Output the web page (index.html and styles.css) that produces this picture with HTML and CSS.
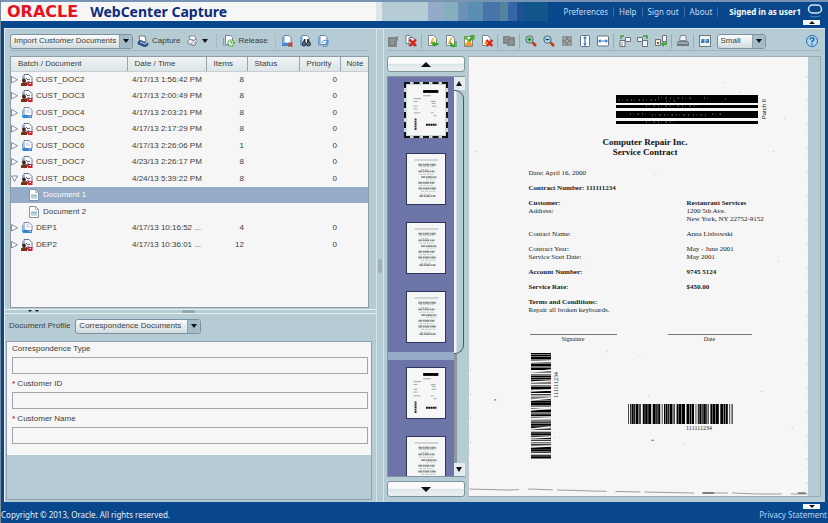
FILE: index.html
```html
<!DOCTYPE html>
<html lang="en">
<head>
<meta charset="utf-8">
<title>Oracle WebCenter Capture</title>
<link rel="stylesheet" href="styles.css">
</head>
<body>
<svg class="defs" aria-hidden="true">
  <symbol id="scanner" viewBox="0 0 12 12"><path d="M2 1h6l1 6H3z" fill="#fff" stroke="#778"/><path d="M1 7l2-2 6 3 2 0v2l-3 2-7-3z" fill="#28568e" stroke="#173a66" stroke-width=".6"/><path d="M3 7l5 2 2-1" fill="none" stroke="#cde"/></symbol>
  <symbol id="scanedit" viewBox="0 0 12 12"><path d="M3 1h6l1 4H4z" fill="#fff" stroke="#889"/><path d="M1 7l3-3 6 3v2l-3 2z" fill="#e8eef2" stroke="#6a7484" stroke-width=".8"/><path d="M5 9l5-5 1 1-4 5z" fill="#fff" stroke="#667" stroke-width=".6"/></symbol>
  <symbol id="batch" viewBox="0 0 12 12"><path d="M3 .5h5l3 3v5H3z" fill="#fff" stroke="#7186ac"/><path d="M1.500 3v6.500h8" fill="none" stroke="#8aa4c8"/><path d="M5 3h3M5 5h4" stroke="#b9c6dc"/><path d="M1 9q4-3 6 0t4-1v3H2z" fill="#2c86d8"/></symbol>
  <symbol id="batchlock" viewBox="0 0 12 12"><path d="M3 .5h5l3 3v6H3z" fill="#fff" stroke="#64759c"/><path d="M1.500 2v5" stroke="#8aa4c8"/><path d="M5 4l2 2 2-1" stroke="#557" fill="none"/><path d="M4 9q3-3 5-1l2 1v2H4z" fill="#3f78bd"/><circle cx="3" cy="6.500" r="1.900" fill="#4b2613"/><path d="M0 12V9.500q3-3 6 0V12z" fill="#6f3515"/><path d="M7 8h4.500v4H7z" fill="#d9202a"/><path d="M8.500 9.500h1.500" stroke="#fff"/></symbol>
  <symbol id="doc" viewBox="0 0 12 12"><path d="M1.500.5h6l3 3v8h-9z" fill="#fff" stroke="#8396a0"/><path d="M7.500.5v3h3" fill="none" stroke="#8396a0" stroke-width=".7"/><path d="M3 5h6v5H3z" fill="#c4d8df"/><path d="M3 7h6" stroke="#8eabb8"/></symbol>
  <symbol id="release" viewBox="0 0 12 12"><path d="M2.500.5h5l2 2v7h-7z" fill="#fff" stroke="#7186ac"/><path d="M.5 3v7h5" fill="none" stroke="#7d9bc4"/><circle cx="8" cy="8" r="3" fill="#eff7e8" stroke="#58a044" stroke-width="1.500" stroke-dasharray="1.500 .6"/><path d="M8 6.500V8h1.500" fill="none" stroke="#357a28"/></symbol>
  <symbol id="batchdel" viewBox="0 0 12 12"><path d="M3 .5h5l2 2v7H3z" fill="#fff" stroke="#6482b4"/><path d="M1.500 2v8h6" fill="none" stroke="#6b98cf"/><path d="M1 9q4-3 8 0v2H1z" fill="#3f8bd5"/><path d="M7.500 7.500l4 4m0-4l-4 4" stroke="#d42c18" stroke-width="1.500"/></symbol>
  <symbol id="find" viewBox="0 0 12 12"><path d="M3 .5h5l2 2v6H3z" fill="#fff" stroke="#6482b4"/><path d="M1.500 2v8h6" fill="none" stroke="#6b98cf"/><path d="M4 7l1-3h1.500v3zm4 0V4h1.500l1 3z" fill="#2a3340"/><circle cx="5" cy="9" r="2" fill="#667380" stroke="#222b38"/><circle cx="9.500" cy="9" r="2" fill="#667380" stroke="#222b38"/></symbol>
  <symbol id="refresh" viewBox="0 0 12 12"><path d="M3 .5h5l2 2v7H3z" fill="#fff" stroke="#6482b4"/><path d="M1.500 2v8h6" fill="none" stroke="#6b98cf"/><path d="M5 8a3 3 0 0 1 5-2l1-1v3H8m3 1a3 3 0 0 1-5 2" fill="none" stroke="#348bdc"/></symbol>
  <symbol id="editoff" viewBox="0 0 12 12"><path d="M1 2h7l3-1v4l-1 1v6H1z" fill="#828586"/><path d="M3 5h5M3 8h4" stroke="#9fa6a8"/></symbol>
  <symbol id="docdel" viewBox="0 0 12 12"><path d="M1 .5h4l3 3v5H1z" fill="#fff" stroke="#758091"/><path d="M4 2.500h4l2 2v6H4z" fill="#d8e4ee" stroke="#667891"/><path d="M4.500 4.500l6.500 6.500m0-6.500l-6.500 6.500" stroke="#df1f13" stroke-width="2.400"/></symbol>
  <symbol id="pagein" viewBox="0 0 12 12"><path d="M1.500.5h5l3 3v7h-8z" fill="#fff" stroke="#7b8690"/><path d="M3 9l2-5 2 5z" fill="#e89922"/><circle cx="6" cy="4" r="1.500" fill="#f3c83e"/><path d="M11.500 8H8V6L4.500 9 8 12v-2h3.500z" fill="#36a428"/></symbol>
  <symbol id="pageend" viewBox="0 0 12 12"><path d="M1.500.5h5l3 3v7h-8z" fill="#fff" stroke="#7b8690"/><path d="M3 9l2-5 2 5z" fill="#e89922"/><circle cx="6" cy="4" r="1.500" fill="#f3c83e"/><path d="M5 8h2l1.500 2L10 8v4H6z" fill="#36a428"/><path d="M11 6v6" stroke="#27901c"/></symbol>
  <symbol id="pageswap" viewBox="0 0 12 12"><path d="M1.500 1.500h8v10h-8z" fill="#fff" stroke="#7b8690"/><path d="M2 9l4-5 3 5v2H2z" fill="#ef9d25"/><path d="M11.500 0v5L10 4 7 7 5 5l3-3-1-2z" fill="#43aa2e"/><path d="M1 1h4L4 3l2 2-1 1-3-2-1 1z" fill="#5fae42"/></symbol>
  <symbol id="pagedel" viewBox="0 0 12 12"><path d="M1.500.5h5l3 3v7h-8z" fill="#fff" stroke="#7b8690"/><path d="M3 9l2-4 2 4z" fill="#e89922"/><path d="M5.500 5l6 6m0-6l-6 6" stroke="#df1f13" stroke-width="2.200"/></symbol>
  <symbol id="copyoff" viewBox="0 0 12 12"><path d="M0 1h7v1h5v9H4V9H0z" fill="#828586"/><path d="M2 3h4M2 5h3M6 6h4M6 8h4" stroke="#979d9f"/></symbol>
  <symbol id="zoomin" viewBox="0 0 12 12"><path d="M7.500 7.500L11 11" stroke="#d92e18" stroke-width="2.500"/><circle cx="4.500" cy="4.500" r="3.700" fill="#a8e0ad" stroke="#526574"/><path d="M4.500 2.500v4m-2-2h4" stroke="#16803a" stroke-width="1.400"/></symbol>
  <symbol id="zoomout" viewBox="0 0 12 12"><path d="M7.500 7.500L11 11" stroke="#d92e18" stroke-width="2.500"/><circle cx="4.500" cy="4.500" r="3.700" fill="#a8e0e6" stroke="#526574"/><path d="M2.500 4.500h4" stroke="#164b78" stroke-width="1.400"/></symbol>
  <symbol id="fitoff" viewBox="0 0 12 12"><rect x="1" y="1" width="10" height="10" rx="1" fill="#8c9092"/><path d="M6 2v8M2 6h8" stroke="#747879"/><path d="M2.500 2.500h2v2h-2zM7.500 2.500h2v2h-2zM2.500 7.500h2v2h-2zM7.500 7.500h2v2h-2zM5 5h2v2H5z" fill="#a5aaad"/></symbol>
  <symbol id="fith" viewBox="0 0 12 12"><rect x="1.500" y=".5" width="9" height="11" rx="1" fill="#fff" stroke="#67717c"/><path d="M6 1l2 2.500H6.600v5H8L6 11 4 8.500h1.400v-5H4z" fill="#2b78cc"/></symbol>
  <symbol id="fitw" viewBox="0 0 12 12"><rect x=".5" y="1" width="11" height="10" rx="1" fill="#fff" stroke="#67717c"/><path d="M1 6l2.500-2v1.400h5V4L11 6 8.500 8V6.600h-5V8z" fill="#2b78cc"/></symbol>
  <symbol id="rotl" viewBox="0 0 12 12"><path d="M1 5.500h5v6H1zM6.500 2.500h5v4h-5z" fill="#f4f4f4" stroke="#5e6870" stroke-width=".9"/><path d="M5 1H2v3" fill="none" stroke="#4a9639" stroke-width="1.500"/><path d="M2 8h2m0 2H2" stroke="#999"/></symbol>
  <symbol id="rotr" viewBox="0 0 12 12"><path d="M5.500 5.500h5v6h-5zM.5 2.500h5v4h-5z" fill="#f4f4f4" stroke="#5e6870" stroke-width=".9"/><path d="M6 1h4v3" fill="none" stroke="#4a9639" stroke-width="1.500"/></symbol>
  <symbol id="rot180" viewBox="0 0 12 12"><path d="M.5 4.500h5v6h-5z" fill="#ffe9bd" stroke="#5e6870" stroke-width=".9"/><path d="M7.500.5h4v6h-4z" fill="#f4f4f4" stroke="#5e6870" stroke-width=".9"/><path d="M2 7h2v2H2z" fill="#3c70b6"/><path d="M12 7v3H9v2L5.500 9 9 6.500V8h1V7z" fill="#48a536"/></symbol>
  <symbol id="print" viewBox="0 0 12 12"><path d="M3.500.5h5l1 5h-7z" fill="#eef3f6" stroke="#818b94"/><path d="M1 6h10l1 2v3H0V8z" fill="#6d7984"/><path d="M1 8h10" stroke="#c5d2da"/></symbol>
  <symbol id="pair" viewBox="0 0 12 12"><rect x=".5" y=".5" width="11" height="11" fill="#eef1f3" stroke="#6f7980"/><path d="M2 4h3.500v4H2zm4.500 0H10v4H6.500z" fill="#397dbb"/><path d="M2 5h1M7 5h1" stroke="#fff"/></symbol>
  <symbol id="help" viewBox="0 0 12 12"><circle cx="6" cy="6" r="5.500" fill="#a9d7f5" stroke="#2869a5"/><path d="M4 4.500Q4 2.800 6 2.800t2 1.700Q8 5.500 6 6.200V7.500M6 8.500V10" fill="none" stroke="#19579c" stroke-width="1.300"/></symbol>
  <symbol id="right" viewBox="0 0 7 8"><path d="M.5.500v6.500L6.500 3.800z" fill="#fff" stroke="#68747c" stroke-width=".8"/></symbol>
  <symbol id="down" viewBox="0 0 7 8"><path d="M.5 1h6L3.500 6.500z" fill="#fff" stroke="#68747c" stroke-width=".8"/></symbol>
  <symbol id="formpage" viewBox="0 0 40 52"><path d="M17 6.500h16" stroke="#000" stroke-width="3"/><path d="M17 11h8" stroke="#999"/><path d="M7 14h8M7 17h4M25 17h5M26 19h4M7 22h4M26 22h5M7 25h4M7 29h7M25 29h3M28 32h3" stroke="#9ba6a6"/><path d="M9 35v12" stroke="#333" stroke-width="2" stroke-dasharray="2 .5"/><path d="M20 41.500h11" stroke="#111" stroke-width="2" stroke-dasharray="2 .4"/></symbol>
  <symbol id="textpage" viewBox="0 0 40 52"><path d="M8 6h25" stroke="#a9b0b0"/><path d="M12 11h19M12 18h17M15 24h16M12 30h17M12 36h19M13 44h17" stroke="#879191" stroke-width="2" stroke-dasharray="4 .7 2 .4"/><path d="M13 13h16M15 16h8M13 21h16M20 26h10M13 33h14M15 39h16M14 42h12" stroke="#b8c0c0" stroke-dasharray="3 1"/></symbol>
</svg>

<header class="top">
  <div class="brand"><span class="oracle">ORACLE</span><h1>WebCenter Capture</h1></div>
  <nav class="links"><a href="#">Preferences</a><a href="#">Help</a><a href="#">Sign out</a><a href="#">About</a><strong>Signed in as user1</strong></nav>
  <svg class="pill" viewBox="0 0 16 14" aria-hidden="true"><rect x="1.500" y="1" width="13" height="8" rx="4" fill="none" stroke="#d8e8f4" stroke-width="1.500"/><path d="M3 12q5 2 10 0" fill="none" stroke="#4d86b6"/></svg>
  <button class="fold fold-up" aria-label="Hide header"></button>
</header>

<main class="app">
  <section class="left">
    <div class="batches">
      <div class="tools">
        <span class="pick profile"><select aria-label="Client profile"><option>Import Customer Documents</option></select></span>
        <button class="tool"><svg><use href="#scanner"/></svg>Capture</button>
        <button class="tool more" aria-label="Capture options"><svg><use href="#scanedit"/></svg><i></i></button>
        <button class="tool rel"><svg><use href="#release"/></svg>Release</button>
        <div class="group last"><button class="tool" aria-label="Delete batch"><svg><use href="#batchdel"/></svg></button><button class="tool" aria-label="Find batch"><svg><use href="#find"/></svg></button><button class="tool" aria-label="Refresh"><svg><use href="#refresh"/></svg></button></div>
      </div>
      <div class="list">
        <table>
          <colgroup><col class="c-name"><col class="c-date"><col class="c-items"><col class="c-status"><col class="c-prio"><col></colgroup>
          <thead><tr><th>Batch / Document</th><th>Date / Time</th><th>Items</th><th>Status</th><th>Priority</th><th>Note</th></tr></thead>
          <tbody>
            <tr><td><div class="name"><svg class="tw"><use href="#right"/></svg><svg><use href="#batchlock"/></svg>CUST_DOC2</div></td><td>4/17/13 1:56:42 PM</td><td>8</td><td></td><td>0</td><td></td></tr>
            <tr><td><div class="name"><svg class="tw"><use href="#right"/></svg><svg><use href="#batchlock"/></svg>CUST_DOC3</div></td><td>4/17/13 2:00:49 PM</td><td>8</td><td></td><td>0</td><td></td></tr>
            <tr><td><div class="name"><svg class="tw"><use href="#right"/></svg><svg><use href="#batch"/></svg>CUST_DOC4</div></td><td>4/17/13 2:03:21 PM</td><td>8</td><td></td><td>0</td><td></td></tr>
            <tr><td><div class="name"><svg class="tw"><use href="#right"/></svg><svg><use href="#batchlock"/></svg>CUST_DOC5</div></td><td>4/17/13 2:17:29 PM</td><td>8</td><td></td><td>0</td><td></td></tr>
            <tr><td><div class="name"><svg class="tw"><use href="#right"/></svg><svg><use href="#batch"/></svg>CUST_DOC6</div></td><td>4/17/13 2:26:06 PM</td><td>1</td><td></td><td>0</td><td></td></tr>
            <tr><td><div class="name"><svg class="tw"><use href="#right"/></svg><svg><use href="#batchlock"/></svg>CUST_DOC7</div></td><td>4/23/13 2:26:17 PM</td><td>8</td><td></td><td>0</td><td></td></tr>
            <tr><td><div class="name"><svg class="tw"><use href="#down"/></svg><svg><use href="#batchlock"/></svg>CUST_DOC8</div></td><td>4/24/13 5:39:22 PM</td><td>8</td><td></td><td>0</td><td></td></tr>
            <tr class="on"><td><div class="name child"><svg><use href="#doc"/></svg>Document 1</div></td><td></td><td></td><td></td><td></td><td></td></tr>
            <tr><td><div class="name child"><svg><use href="#doc"/></svg>Document 2</div></td><td></td><td></td><td></td><td></td><td></td></tr>
            <tr><td><div class="name"><svg class="tw"><use href="#right"/></svg><svg><use href="#batch"/></svg>DEP1</div></td><td>4/17/13 10:16:52 ...</td><td>4</td><td></td><td>0</td><td></td></tr>
            <tr><td><div class="name"><svg class="tw"><use href="#right"/></svg><svg><use href="#batchlock"/></svg>DEP2</div></td><td>4/17/13 10:36:01 ...</td><td>12</td><td></td><td>0</td><td></td></tr>
          </tbody>
        </table>
      </div>
    </div>
    <div class="hsplit"><span class="arrows"><i></i><i></i></span><span class="grip"></span></div>
    <div class="meta">
      <div class="profile-row"><label for="dp">Document Profile</label><span class="pick docprofile"><select id="dp"><option>Correspondence Documents</option></select></span></div>
      <form class="form">
        <div class="fields">
          <label for="ct">Correspondence Type</label><input id="ct">
          <label for="ci"><b>*</b> Customer ID</label><input id="ci">
          <label for="cn"><b>*</b> Customer Name</label><input id="cn">
        </div>
      </form>
    </div>
  </section>
  <div class="vsplit"><span></span></div>
  <section class="right">
    <div class="tools view">
      <div class="group first"><button class="tool" aria-label="Edit document"><svg><use href="#editoff"/></svg></button><button class="tool" aria-label="Delete document"><svg><use href="#docdel"/></svg></button></div>
      <div class="group"><button class="tool" aria-label="Insert page"><svg><use href="#pagein"/></svg></button><button class="tool" aria-label="Append page"><svg><use href="#pageend"/></svg></button><button class="tool" aria-label="Replace page"><svg><use href="#pageswap"/></svg></button><button class="tool" aria-label="Delete page"><svg><use href="#pagedel"/></svg></button></div>
      <div class="group"><button class="tool" aria-label="Copy"><svg><use href="#copyoff"/></svg></button></div>
      <div class="group"><button class="tool" aria-label="Zoom in"><svg><use href="#zoomin"/></svg></button><button class="tool" aria-label="Zoom out"><svg><use href="#zoomout"/></svg></button><button class="tool" aria-label="Fit page"><svg><use href="#fitoff"/></svg></button><button class="tool" aria-label="Fit height"><svg><use href="#fith"/></svg></button><button class="tool" aria-label="Fit width"><svg><use href="#fitw"/></svg></button></div>
      <div class="group"><button class="tool" aria-label="Rotate left"><svg><use href="#rotl"/></svg></button><button class="tool" aria-label="Rotate right"><svg><use href="#rotr"/></svg></button><button class="tool" aria-label="Rotate 180"><svg><use href="#rot180"/></svg></button></div>
      <div class="group"><button class="tool" aria-label="Print"><svg><use href="#print"/></svg></button></div>
      <div class="group"><button class="tool" aria-label="Thumbnails"><svg><use href="#pair"/></svg></button><span class="pick size"><select aria-label="Thumbnail size"><option>Small</option></select></span></div>
      <button class="tool help" aria-label="Help"><svg><use href="#help"/></svg></button>
    </div>
    <div class="viewer">
      <div class="thumbs">
        <button class="step up" aria-label="Previous"></button>
        <div class="strip">
          <div class="pages">
            <div class="doc"><svg class="thumb sel"><use href="#formpage"/></svg><svg class="thumb"><use href="#textpage"/></svg><svg class="thumb"><use href="#textpage"/></svg><svg class="thumb"><use href="#textpage"/></svg></div>
            <div class="doc"><svg class="thumb"><use href="#formpage"/></svg><svg class="thumb"><use href="#textpage"/></svg></div>
          </div>
          <div class="scroll"><button class="up" aria-label="Scroll up"></button><span class="knob"></span><span class="track"></span><button aria-label="Scroll down"></button></div>
        </div>
        <button class="step" aria-label="Next"></button>
      </div>
      <div class="canvas">
        <article class="page">
          <svg class="specks" viewBox="0 0 340 441" aria-hidden="true"><path d="M0 434l40 1 20-1 30 1 35 1 50 1 50 1 40 0 25 1 50 0" fill="none" stroke="#888" stroke-width=".8" stroke-dasharray="50 9 25 4"/><path d="M234 438h12M330 438h8" stroke="#333"/><path d="M255 26h1M272 35h1M316 62h1M184 385h2M138 296h1M310 205h1M171 300h1M293 336h1M216 388h1M120 208h1M187 118h1M324 372h1M305 95h1M180 340h1M85 382h1M6 95h1" stroke="#bbb"/><path d="M25 344.500h2M183 385h2" stroke="#555"/><path d="M1 300v90M339 5v430" stroke="#bbb" stroke-width=".6" stroke-dasharray="1 13 2 8"/></svg>
          <div class="patch">
            <svg viewBox="0 0 142 29" aria-hidden="true"><path d="M0 0h142v8H0zM0 10h142v3H0zM0 16h142v7H0zM0 26h142v3H0z"/><path d="M3 5h40M42 3h35M50 6h12M88 3h4M109 4h3M14 19h20M36 20h38M77 20h14M96 19h10M30 11h55M30 27h30" stroke="#aaa" stroke-width=".8" stroke-dasharray="1 2 .5 4 1.500 3"/></svg>
            <span>Patch II</span>
          </div>
          <h2>Computer Repair Inc.<br>Service Contract</h2>
          <div class="terms">
            <p>Date: April 16, 2000</p><p></p>
            <p><b>Contract Number: 111111234</b></p><p></p>
            <p><b>Customer:</b><br>Address:</p><p><b>Restaurant Services</b><br>1200 5th Ave.<br>New York, NY 22752-9152</p>
            <p>Contact Name:</p><p>Anna Lisbowski</p>
            <p>Contract Year:<br>Service Start Date:</p><p>May - June 2001<br>May 2001</p>
            <p><b>Account Number:</b></p><p><b>9745 5124</b></p>
            <p><b>Service Rate:</b></p><p><b>$450.00</b></p>
            <p><b>Terms and Conditions:</b><br>Repair all broken keyboards.</p><p></p>
          </div>
          <div class="sign"><span>Signature</span><span>Date</span></div>
          <div class="codes">
            <div class="vcode"><svg viewBox="0 0 20 106" aria-hidden="true"><path d="M10 0V106" stroke="#000" stroke-width="20" stroke-dasharray="1 .5 2 .4 2 .5 1 2 1 .5 2 .5 1 .6 2 1 .6 1 .5 1.300 1 .7"/><path d="M0 9l20-1M0 19l20-2M0 29l20-1M0 38l20-1M0 47l20-2M0 57l20-2M0 66l20-1M0 76l20-2M0 85l20-1M0 94l20-1" stroke="#f5f5f5" stroke-width="1.300"/></svg><span>111111234</span></div>
            <div class="hcode"><svg viewBox="0 0 105 20" aria-hidden="true"><path d="M0 10H105" stroke="#000" stroke-width="20" stroke-dasharray=".7 1.500 1 .5 2 .4 1 .6 2.500 .5 1 .6 .7 1.800 2 .4 2.500 .5 3 1.500 3 .5 1.500 .5 2 1.600"/></svg><span>111111234</span></div>
          </div>
        </article>
      </div>
    </div>
  </section>
</main>

<footer class="foot"><span>Copyright © 2013, Oracle. All rights reserved.</span><a href="#">Privacy Statement</a><button class="fold fold-down" aria-label="Hide footer"></button></footer>
</body>
</html>
```
FILE: styles.css
```css
:root { --pale: #b5ccd4; --blue: #08478c; --paper: #f6f6f6; --line: #8f9da6; }
* { box-sizing: border-box; }
body { margin: 0; height: 100vh; overflow: hidden; display: flex; flex-direction: column; background: var(--blue); border-left: 1px solid #7c8c9c; font: 8px/10px "Liberation Sans", Arial, sans-serif; color: #3c3c3c; }
button, select, input { font: inherit; color: inherit; margin: 0; padding: 0; border: 0; background: none; }
h1, h2, p { margin: 0; }
a { color: inherit; text-decoration: none; }
.defs { position: absolute; width: 0; height: 0; }

.top { position: relative; height: 28px; flex: none; display: flex; justify-content: space-between; border-top: 2px solid #7894b4; font-family: "Noto Sans", sans-serif; }
.top { background: linear-gradient(90deg, var(--paper) 375px, #dde6e8 375px 381px, var(--pale) 381px 427px, #93abc8 427px 443px, #84b0bd 443px 457px, #6c91b5 457px 467px, #5a8eb2 467px 482px, #4874aa 482px 499px, #55839f 499px 507px, #3567a8 507px 516px, #205292 516px 522px, #10568c 522px 547px, var(--blue) 547px) 0 0 / 100% 19px no-repeat; }
.brand { display: flex; align-items: center; height: 19px; padding-left: 6px; gap: 12px; }
.oracle { font: bold 16px/18px "DejaVu Sans", sans-serif; color: #e8121c; }
h1 { font: bold 14px/18px "Noto Sans", sans-serif; color: #0c2c7c; }
.links { display: flex; align-items: center; height: 19px; padding-right: 27px; color: #c6dcf0; }
.links a { padding-right: 5px; margin-right: 5px; border-right: 1px solid #3c6ca0; }
.links strong { padding-left: 6px; color: #fff; }
.pill { position: absolute; right: 5px; top: 2px; width: 16px; height: 14px; }
.fold { position: absolute; right: 8px; width: 17px; height: 5px; background: var(--paper); }
.fold-up { top: 18px; }
.fold-down { top: 2px; }
.fold::after, .step::after, .scroll button::after, .pick::after, .more i, .arrows i { content: ""; display: block; width: 0; height: 0; margin: auto; border: solid transparent; border-width: 4px 3px 0; border-top-color: #111; }
.fold::after { border-width: 3px 3px 0; }
.fold-up::after, .step.up::after, .scroll .up::after { transform: rotate(180deg); }

.app { flex: 1; min-height: 0; display: grid; grid-template-columns: 371fr 8px 442fr; margin: 0 3px 0 3px; background: var(--pale); border-left: 1px solid #e8f0f2; border-top: 1px solid #dfeaee; }
.left { display: flex; flex-direction: column; min-width: 0; min-height: 0; }
.batches { flex: 281 1 0; min-height: 0; display: flex; flex-direction: column; padding: 0 7px 1px 5px; }
.tools { display: flex; align-items: center; height: 22px; padding-top: 3px; border-bottom: 1px solid #a0b4c0; flex: none; }
.tool { display: flex; align-items: center; gap: 3px; height: 14px; }
.tool svg { width: 12px; height: 12px; }
.pick { position: relative; display: inline-flex; align-items: center; height: 15px; border: 1px solid #7c929e; border-radius: 3px; background: linear-gradient(#fafafa, #e4eaec 60%, #d0dadd); }
.pick select { appearance: none; width: 100%; height: 13px; padding: 0 14px 0 3px; outline: 0; }
.pick::after { position: absolute; right: 3px; top: 4px; pointer-events: none; }
.pick::before { content: ""; position: absolute; right: 0; top: 0; bottom: 0; width: 12px; background: #a4bcc8; border-left: 1px solid #8ba2ad; border-radius: 0 2px 2px 0; pointer-events: none; }
.profile { width: 123px; margin-right: 4px; }
.more { margin: 0 8px 0 6px; gap: 4px; }
.rel { padding-left: 6px; border-left: 1px dotted #98aab4; }
.group { display: flex; align-items: center; gap: 6px; margin-left: 4px; padding-left: 5px; height: 15px; border-left: 1px solid #9cadb8; }
.group.first { margin: 0; padding: 0; border: 0; }
.group.last { margin-left: 7px; border-left-style: dotted; }

.list { flex: 1; min-height: 0; margin-top: 5px; border: 1px solid var(--line); background: var(--paper); overflow: hidden; }
table { width: 100%; border-collapse: collapse; table-layout: fixed; }
.c-name { width: 116px; }
.c-date { width: 79px; }
.c-items { width: 41px; }
.c-status { width: 52px; }
.c-prio { width: 41px; }
th { height: 14px; padding: 0 0 0 7px; font-weight: normal; text-align: left; background: linear-gradient(#f0f3f4, #dce6e8); border-right: 1px solid #93a5ae; border-bottom: 1px solid #c8ced0; white-space: nowrap; }
th:last-child { border-right: 0; padding-left: 6px; }
td { height: 16px; padding: 0 0 0 5px; white-space: nowrap; }
tr:nth-child(odd) td { height: 17px; }
td:first-child { padding: 0; }
td:nth-child(3), td:nth-child(5) { text-align: right; padding-right: 3px; }
.name { display: flex; align-items: center; gap: 3px; height: 14px; }
.name svg { width: 12px; height: 12px; }
.name .tw { width: 7px; height: 8px; }
.child { padding-left: 17px; }
.on { background: #94acc8; color: #fff; }

.hsplit { flex: none; display: flex; align-items: center; height: 5px; border: solid #e6eff1; border-width: 1px 0; }
.arrows { display: flex; gap: 3px; margin-left: 23px; }
.arrows i { border-width: 2px 2px 0; }
.grip { width: 13px; height: 3px; margin-left: 143px; background: #94a5af; border-radius: 2px; }
.meta { flex: 183 1 0; min-height: 0; display: flex; flex-direction: column; padding: 5px 4px 2px 1px; }
.profile-row { display: flex; align-items: center; height: 15px; gap: 5px; padding-left: 3px; }
.docprofile { width: 126px; }
.form { flex: 1; margin-top: 7px; border: 1px solid #8fa1b0; }
.fields { display: flex; flex-direction: column; padding: 2px 3px 11px 5px; background: var(--paper); }
.fields label { height: 10px; }
.fields b { color: #b03c3c; }
.fields input { height: 17px; margin: 3px 0 5px; border: 1px solid #a0a6a9; background: #f6f6f6; }
.fields input:last-child { margin-bottom: 0; }

.vsplit { display: flex; align-items: center; justify-content: center; border: solid #d8e4e8; border-width: 0 1px; }
.vsplit span { width: 4px; height: 14px; border-radius: 2px; background: #9fb1bb; }
.right { min-width: 0; min-height: 0; display: flex; flex-direction: column; padding: 0 4px 5px 3px; }
.view .size { width: 49px; }
.help { margin-left: auto; margin-right: 3px; }
.viewer { flex: 1; min-height: 0; display: flex; gap: 3px; padding-top: 5px; }
.thumbs { width: 78px; display: flex; flex-direction: column; gap: 4px; }
.step { flex: none; height: 16px; border: 1px solid #80949c; border-radius: 3px; background: linear-gradient(#fafafa 45%, #dce6e8 50% 60%, #e8eeef 65%); }
.step::after { border-width: 5px 5px 0; }
.strip { flex: 1; min-height: 0; display: flex; border: solid #8790a8; border-width: 1px 0 1px 1px; }
.pages { width: 66px; overflow: hidden; background: #6c74a8; }
.doc { display: flex; flex-direction: column; align-items: center; gap: 17px; padding: 7px 0 9px 10px; }
.doc + .doc { border-top: 8px solid #94acc8; }
.thumb { flex: none; width: 40px; height: 52px; background: var(--paper); border: 1px solid #30365a; }
.sel { outline: 2px dashed #111; border-color: #c8d8dc; box-shadow: 0 0 0 2px #d0dcdc; }
.scroll { flex: 1; display: flex; flex-direction: column; background: var(--pale); }
.scroll button { height: 13px; flex: none; background: #e4ecee; }
.scroll button::after { border-width: 5px 3px 0; }
.knob { flex: 265; margin-right: 1px; background: linear-gradient(90deg, #f0f4f5 2px, var(--pale) 3px); border: 1px solid #4c5860; border-left: 0; border-radius: 0 9px 9px 0; }
.track { flex: 110; border-left: 3px solid #8e989c; }

.canvas { flex: 1; min-width: 0; border: 1px solid #9baab4; border-left: 0; overflow: hidden; }
.page { position: relative; width: 340px; height: 100%; background: var(--paper); color: #222; font: 7px/8px "Liberation Serif", "Times New Roman", serif; padding: 38px 46px 0 60px; border-left: 1px solid #c0c8cc; }
.specks { position: absolute; inset: 0; width: 100%; height: 100%; }
.patch { display: flex; justify-content: flex-end; align-items: center; gap: 2px; height: 29px; margin-right: -6px; }
.patch svg { width: 142px; height: 29px; }
.patch span, .vcode span { writing-mode: vertical-rl; transform: rotate(180deg); }
.patch span { font: 6px/8px "Liberation Sans", sans-serif; }
h2 { margin: 13px 0 12px; font-size: 9px; line-height: 10px; text-align: center; color: #111; }
.terms { display: grid; grid-template-columns: 158px 1fr; row-gap: 7px; white-space: nowrap; }
.sign { display: grid; grid-template-columns: 87px 84px; gap: 51px; margin: 20px 0 0 1px; font-size: 6px; text-align: center; }
.sign span { border-top: 1px solid #777; }
.codes { display: flex; align-items: center; justify-content: space-between; height: 106px; margin: 10px 29px 0 2px; font-size: 6px; }
.vcode { display: flex; align-items: flex-start; gap: 1px; }
.vcode svg { width: 20px; height: 106px; }
.vcode span { margin-top: 19px; }
.hcode { display: flex; flex-direction: column; padding-top: 24px; text-align: center; }
.hcode svg { width: 105px; height: 20px; }
.hcode span { padding-left: 38px; }

.foot { position: relative; flex: none; display: flex; align-items: flex-end; justify-content: space-between; height: 21px; padding: 0 1px 3px 0; color: #e8f0f8; font: 8px/11px "Noto Sans", sans-serif; }
.foot a { color: #b8d4ec; }
```
